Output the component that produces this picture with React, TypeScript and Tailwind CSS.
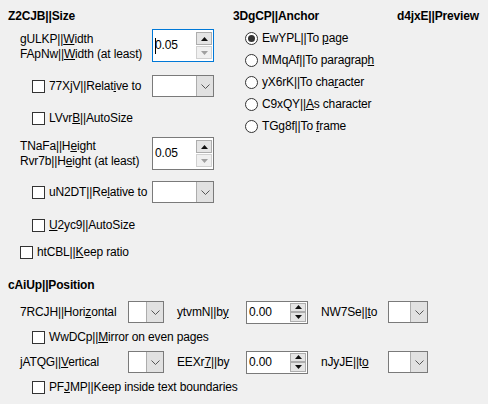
import React from "react";

function Mn({ a, u, b }: { a?: string; u: string; b?: string }) {
  return (
    <span className="whitespace-nowrap">
      {a}
      <span className="underline underline-offset-1">{u}</span>
      {b}
    </span>
  );
}

function Check({ children }: { children: React.ReactNode }) {
  return (
    <div className="flex items-center">
      <span className="h-[13px] w-[13px] border border-[#333] bg-white" />
      <span className="ml-1">{children}</span>
    </div>
  );
}

function Radio({ on, children }: { on?: boolean; children: React.ReactNode }) {
  return (
    <div className="flex h-[22px] items-center">
      <span className="flex h-[13px] w-[13px] items-center justify-center rounded-full border border-[#333] bg-white">
        {on && <span className="h-[7px] w-[7px] rounded-full bg-[#333]" />}
      </span>
      <span className="ml-1">{children}</span>
    </div>
  );
}

function Arrow({ up, dim }: { up?: boolean; dim?: boolean }) {
  return (
    <svg width="7" height="4" viewBox="0 0 7 4">
      <path d={up ? "M0 4 L3.5 0 L7 4 Z" : "M0 0 L3.5 4 L7 0 Z"} fill={dim ? "#a0a0a0" : "#111"} />
    </svg>
  );
}

function Spin({ value, big, focus }: { value: string; big?: boolean; focus?: boolean }) {
  return (
    <div
      className={`flex w-[62px] items-stretch border bg-white ${
        big ? "h-[33px]" : "h-[23px]"
      } ${focus ? "border-[#0078d7]" : "border-[#7a7a7a]"}`}
    >
      <div className="flex flex-1 items-center pl-[2px]">
        {focus && <div className="mr-[-1px] h-[16px] w-px bg-black" />}
        <span>{value}</span>
      </div>
      <div className={`mr-[1px] flex w-[16px] flex-col ${big ? "gap-[1px] py-[2px]" : "py-[1px]"}`}>
        <div className="flex flex-1 items-center justify-center border border-[#adadad] bg-[#e5e5e5]">
          <Arrow up />
        </div>
        <div
          className={`flex flex-1 items-center justify-center border ${
            big ? "border-[#d0d0d0] bg-[#f0f0f0]" : "border-[#adadad] bg-[#e5e5e5]"
          }`}
        >
          <Arrow dim={big} />
        </div>
      </div>
    </div>
  );
}

function Drop({ w }: { w: string }) {
  return (
    <div className={`flex h-[22px] border border-[#7a7a7a] bg-white ${w}`}>
      <div className="flex-1" />
      <div className="flex w-[17px] items-center justify-center border-l border-[#adadad] bg-[#e1e1e1]">
        <svg width="9" height="5" viewBox="0 0 9 5">
          <path d="M0.5 0.5 L4.5 4.5 L8.5 0.5" fill="none" stroke="#555" strokeWidth="1" />
        </svg>
      </div>
    </div>
  );
}

export default function App() {
  return (
    <div
      className="h-[404px] w-[488px] overflow-hidden bg-[#f0f0f0] text-[12px] leading-[15px] tracking-[-0.15px] text-black"
      style={{ fontFamily: '"Liberation Sans", Arial, sans-serif' }}
    >
      <div className="flex">
        {/* Size */}
        <div className="w-[225px] pl-2">
          <div className="mt-2 h-4 font-bold leading-4">Z2CJB||Size</div>
          <div className="mt-[5px] flex h-[33px] items-center pl-3">
            <div className="w-[132px] pt-[2px]">
              <div><Mn a="gULKP||" u="W" b="idth" /></div>
              <div><Mn a="FApNw||" u="W" b="idth (at least)" /></div>
            </div>
            <Spin value="0.05" big focus />
          </div>
          <div className="mt-[13px] flex h-[22px] items-center pl-6">
            <div className="w-[120px]">
              <Check><Mn a="77XjV||Relat" u="i" b="ve to" /></Check>
            </div>
            <Drop w="w-[62px]" />
          </div>
          <div className="mt-[10px] flex h-[22px] items-center pl-6">
            <Check><Mn a="LVvr" u="B" b="||AutoSize" /></Check>
          </div>
          <div className="mt-[8px] flex h-[33px] items-center pl-3">
            <div className="w-[132px]">
              <div><Mn a="TNaFa||H" u="e" b="ight" /></div>
              <div><Mn a="Rvr7b||H" u="e" b="ight (at least)" /></div>
            </div>
            <Spin value="0.05" big />
          </div>
          <div className="mt-[11px] flex h-[22px] items-center pl-6">
            <div className="w-[120px]">
              <Check><Mn a="uN2DT||Re" u="l" b="ative to" /></Check>
            </div>
            <Drop w="w-[62px]" />
          </div>
          <div className="mt-[11px] flex h-[22px] items-center pl-6">
            <Check><Mn u="U" b="2yc9||AutoSize" /></Check>
          </div>
          <div className="mt-[5px] flex h-[22px] items-center pl-3">
            <Check><Mn a="htCBL||" u="K" b="eep ratio" /></Check>
          </div>
        </div>

        {/* Anchor + Preview */}
        <div className="flex-1 pl-2">
          <div className="mt-2 flex h-4 font-bold leading-4">
            <span className="w-[164px]">3DgCP||Anchor</span>
            <span>d4jxE||Preview</span>
          </div>
          <div className="mt-[3px] pl-3">
            <Radio on><Mn a="EwYPL||To " u="p" b="age" /></Radio>
            <Radio><Mn a="MMqAf||To paragrap" u="h" /></Radio>
            <Radio><Mn a="yX6rK||To cha" u="r" b="acter" /></Radio>
            <Radio><Mn a="C9xQY||" u="A" b="s character" /></Radio>
            <Radio><Mn a="TGg8f||To " u="f" b="rame" /></Radio>
          </div>
        </div>
      </div>

      {/* Position */}
      <div className="pl-2">
        <div className="mt-[14px] h-4 font-bold leading-4">cAiUp||Position</div>
        <div className="mt-[8px] flex h-[22px] items-center pl-3">
          <div className="w-[108px]"><Mn a="7RCJH||Hori" u="z" b="ontal" /></div>
          <Drop w="w-[36px]" />
          <div className="ml-[13px] w-[69px]"><Mn a="ytvmN||b" u="y" /></div>
          <Spin value="0.00" />
          <div className="ml-[13px] w-[67px]"><Mn a="NW7Se||" u="t" b="o" /></div>
          <Drop w="w-[40px]" />
        </div>
        <div className="mt-[3px] flex h-[22px] items-center pl-6">
          <Check><Mn a="WwDCp||" u="M" b="irror on even pages" /></Check>
        </div>
        <div className="mt-[3px] flex h-[22px] items-center pl-3">
          <div className="w-[108px]"><Mn a="jATQG||" u="V" b="ertical" /></div>
          <Drop w="w-[36px]" />
          <div className="ml-[13px] w-[69px]"><Mn a="EEXr" u="7" b="||by" /></div>
          <Spin value="0.00" />
          <div className="ml-[13px] w-[67px]"><Mn a="nJyJE||t" u="o" /></div>
          <Drop w="w-[40px]" />
        </div>
        <div className="mt-[3px] flex h-[22px] items-center pl-6">
          <Check><Mn a="PF" u="J" b="MP||Keep inside text boundaries" /></Check>
        </div>
      </div>
    </div>
  );
}
